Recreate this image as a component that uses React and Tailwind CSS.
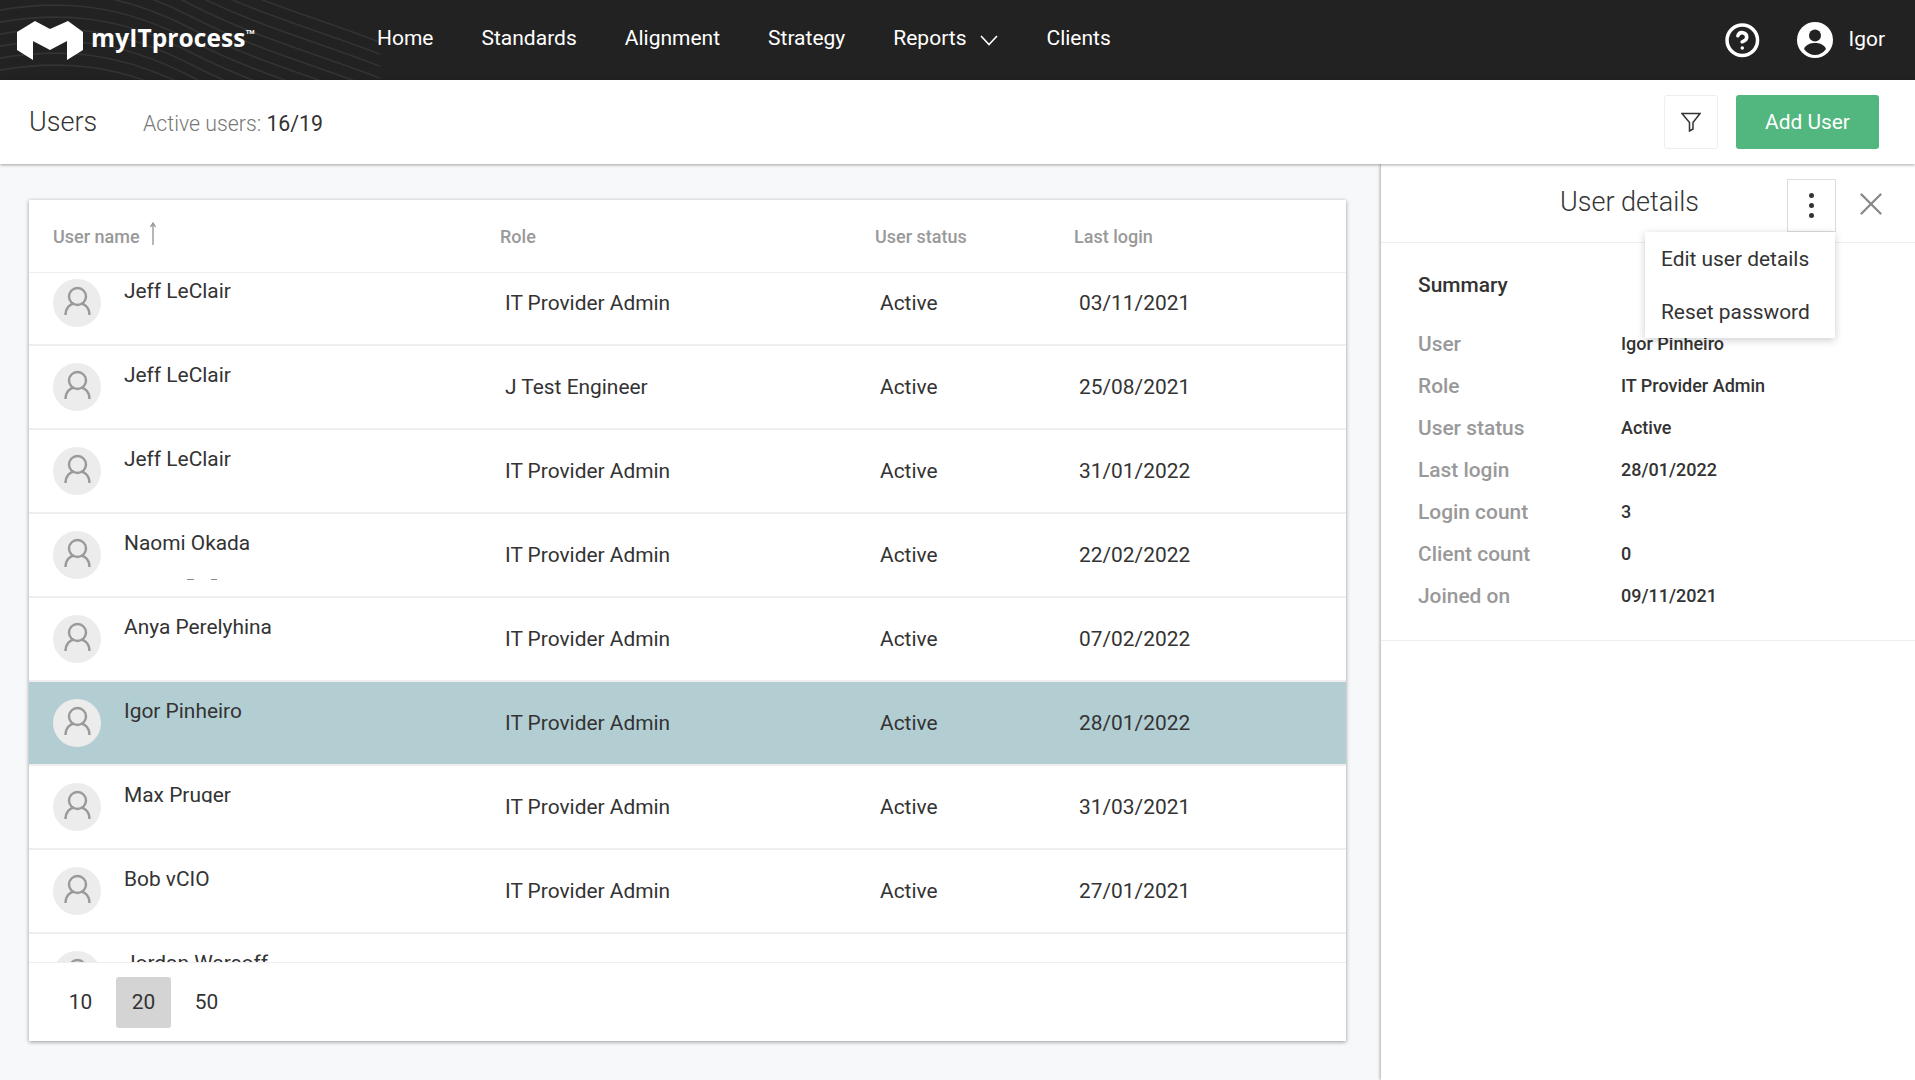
import React from "react";
import { CircleHelp, X } from "lucide-react";

const rows = [
  ["Jeff LeClair", "IT Provider Admin", "03/11/2021"],
  ["Jeff LeClair", "J Test Engineer", "25/08/2021"],
  ["Jeff LeClair", "IT Provider Admin", "31/01/2022"],
  ["Naomi Okada", "IT Provider Admin", "22/02/2022"],
  ["Anya Perelyhina", "IT Provider Admin", "07/02/2022"],
  ["Igor Pinheiro", "IT Provider Admin", "28/01/2022"],
  ["Max Pruger", "IT Provider Admin", "31/03/2021"],
  ["Bob vCIO", "IT Provider Admin", "27/01/2021"],
  ["Jordan Warsoff", "IT Provider Admin", "14/01/2022"],
];

const details = [
  ["User", "Igor Pinheiro"],
  ["Role", "IT Provider Admin"],
  ["User status", "Active"],
  ["Last login", "28/01/2022"],
  ["Login count", "3"],
  ["Client count", "0"],
  ["Joined on", "09/11/2021"],
];

function Waves() {
  const lines = [];
  for (let y = -60; y <= 72; y += 12) {
    lines.push(
      <path key={y} d={`M-10 ${y} C60 ${y - 14} 120 ${y - 8} 190 ${y + 28} S320 ${y + 78} 400 ${y + 110}`} />
    );
  }
  return (
    <svg className="absolute left-0 top-0 h-20 w-[380px]" viewBox="0 0 380 80" fill="none" stroke="#333333" strokeWidth="1.6">
      {lines}
    </svg>
  );
}

function Logo() {
  return (
    <svg className="relative h-[39px] w-[66px] shrink-0" viewBox="0 0 66 39" fill="#fff">
      <path d="M0 11 L18 0 L33 8 L33 12 L33 8 L51 0 L66 11 L66 29 L50 39 L50 20 L33 29 L16 20 L16 39 L0 29 Z" />
    </svg>
  );
}

function Avatar() {
  return (
    <div className="flex h-12 w-12 shrink-0 items-center justify-center rounded-full bg-[#ececec]">
      <svg className="h-12 w-12" viewBox="0 0 48 48" fill="none" stroke="#999" strokeWidth="2.4">
        <circle cx="24.5" cy="17.5" r="8.5" />
        <path d="M12.5 36 C12.5 29 17 25 21 24.5 M36.5 36 C36.5 29 32 25 28 24.5" />
      </svg>
    </div>
  );
}

function Row({ name, role, date, selected, clipped, sliver }) {
  return (
    <div className={`relative flex h-[84px] items-start border-b-2 border-[#eeeeee] pl-6 ${selected ? "bg-[#b3ced3]" : ""}`}>
      <div className="flex w-[452px] items-start pt-[17px]">
        <Avatar />
        <div className={`ml-[23px] leading-6 ${clipped ? "h-5 overflow-hidden" : ""}`}>{name}</div>
      </div>
      <div className="w-[375px] pt-[29px] leading-6">{role}</div>
      <div className="w-[199px] pt-[29px] leading-6">Active</div>
      <div className="pt-[29px] leading-6">{date}</div>
      {sliver && (
        <div className="absolute left-[158px] top-[65px] flex gap-[17px]">
          <div className="h-px w-[7px] bg-[#888]" />
          <div className="h-px w-[6px] bg-[#888]" />
        </div>
      )}
    </div>
  );
}

export default function App() {
  return (
    <div className="flex h-screen flex-col overflow-hidden bg-[#f7f8fa] font-[Roboto,sans-serif] text-[20.9px] text-[#333]">
      <header className="relative flex h-20 shrink-0 items-center bg-[#222222] text-white">
        <Waves />
        <div className="relative ml-[17px] flex w-[360px] items-center">
          <Logo />
          <span className="mb-1 ml-[8px] font-['Open_Sans',sans-serif] text-[24.5px] font-bold leading-none tracking-[0.1px]">myITprocess</span>
          <span className="mb-4 text-[6px] font-bold leading-none">TM</span>
        </div>
        <nav className="relative mb-[2px] flex items-center gap-12 text-[21px]">
          <span>Home</span>
          <span>Standards</span>
          <span>Alignment</span>
          <span>Strategy</span>
          <span className="flex items-center">
            Reports
            <svg className="ml-[14px] mt-[2px] h-[11px] w-[18px]" viewBox="0 0 18 11" fill="none" stroke="#fff" strokeWidth="1.6">
              <path d="M1 1 L9 9.5 L17 1" />
            </svg>
          </span>
          <span>Clients</span>
        </nav>
        <div className="ml-auto flex items-center pr-[30px]">
          <CircleHelp size={36.6} strokeWidth={2.3} />
          <svg className="mb-[1px] ml-[36px] h-9 w-9" viewBox="0 0 36 36">
            <circle cx="18" cy="18" r="18" fill="#fff" />
            <circle cx="18" cy="13.5" r="6" fill="#222" />
            <path d="M7 27 C9 22 14 21 18 21 C22 21 27 22 29 27 C26 31 22 33 18 33 C14 33 10 31 7 27 Z" fill="#222" />
          </svg>
          <span className="mb-[1px] ml-[16px] font-normal">Igor</span>
        </div>
      </header>

      <div className="relative z-10 flex h-[84px] shrink-0 items-center bg-white pl-[29px] pr-9 shadow-[0_1px_3px_rgba(0,0,0,0.35)]">
        <h1 className="w-[114px] text-[27px] font-light leading-none">Users</h1>
        <div className="mt-[3px] text-[21.3px] font-light text-[#777]">
          Active users: <span className="font-normal text-[#333]">16/19</span>
        </div>
        <button className="ml-auto flex h-[54px] w-[54px] items-center justify-center rounded-[3px] border border-[#eeeeee]">
          <svg className="h-5 w-5" viewBox="0 0 20 20" fill="none" stroke="#333" strokeWidth="1.5">
            <path d="M1 1.5 H19 L12 10.5 V17 L8.5 19 V10.5 Z" />
          </svg>
        </button>
        <button className="ml-[18px] h-[54px] w-[143px] rounded-[3px] bg-[#52b77f] pt-[1px] text-white">Add User</button>
      </div>

      <main className="flex min-h-0 flex-1">
        <div className="flex-1 pl-[29px] pt-9">
          <section className="flex h-[841px] w-[1317px] flex-col bg-white shadow-[0_1px_4px_rgba(0,0,0,0.4)]">
            <div className="relative flex h-[73px] shrink-0 items-center border-b border-[#eeeeee] pl-6 text-[18px] font-medium text-[#999]">
              <div className="flex w-[447px] items-center">
                User name
                <svg className="absolute left-[120px] top-[22px] h-[23px] w-2" viewBox="0 0 8 23" fill="none" stroke="#999" strokeWidth="1.4">
                  <path d="M4 23 V1 M1.5 5 L4 1 L6.5 5" />
                </svg>
              </div>
              <div className="w-[375px]">Role</div>
              <div className="w-[199px]">User status</div>
              <div>Last login</div>
            </div>
            <div className="h-[689px] overflow-hidden">
              <div className="-mt-[11px]">
                {rows.map((r, i) => (
                  <Row
                    key={i}
                    name={r[0]}
                    role={r[1]}
                    date={r[2]}
                    selected={i === 5}
                    clipped={i === 6}
                    sliver={i === 3}
                  />
                ))}
              </div>
            </div>
            <div className="flex flex-1 items-center gap-2 border-t border-[#eeeeee] pl-6">
              <button className="h-[51px] w-[55px] rounded-[3px] pt-[1px]">10</button>
              <button className="h-[51px] w-[55px] rounded-[3px] bg-[#d4d4d4] pt-[1px]">20</button>
              <button className="h-[51px] w-[55px] rounded-[3px] pt-[1px]">50</button>
            </div>
          </section>
        </div>

        <aside className="relative flex w-[534px] shrink-0 flex-col bg-white shadow-[-1px_0_3px_rgba(0,0,0,0.3)]">
          <div className="relative flex h-[79px] shrink-0 items-center border-b border-[#eeeeee]">
            <h2 className="ml-[179px] -mt-[1px] text-[27px] font-light">User details</h2>
            <button className="absolute left-[406px] top-[15px] flex h-[53px] w-[49px] flex-col items-center justify-center gap-[5px] border border-[#dddddd]">
              <i className="h-[5px] w-[5px] rounded-full bg-[#333]" />
              <i className="h-[5px] w-[5px] rounded-full bg-[#333]" />
              <i className="h-[5px] w-[5px] rounded-full bg-[#333]" />
            </button>
            <X className="absolute left-[471px] top-[21px] text-[#888]" size={38} strokeWidth={1.5} />
          </div>

          <div className="absolute left-[264px] top-[68px] z-10 flex h-[106px] w-[190px] flex-col bg-white pl-4 shadow-[0_2px_8px_rgba(0,0,0,0.2)]">
            <div className="mt-[15px] leading-6">Edit user details</div>
            <div className="mt-[29px] leading-6">Reset password</div>
          </div>

          <div className="border-b border-[#eeeeee] pb-[32px] pl-[37px] pt-[30px]">
            <h3 className="font-medium leading-6">Summary</h3>
            <div className="mt-[35px] flex flex-col gap-[18px]">
              {details.map(([k, v]) => (
                <div key={k} className="flex items-center leading-6">
                  <div className="w-[203px] font-medium text-[#999]">{k}</div>
                  <div className="text-[18px] font-medium">{v}</div>
                </div>
              ))}
            </div>
          </div>
        </aside>
      </main>
    </div>
  );
}
